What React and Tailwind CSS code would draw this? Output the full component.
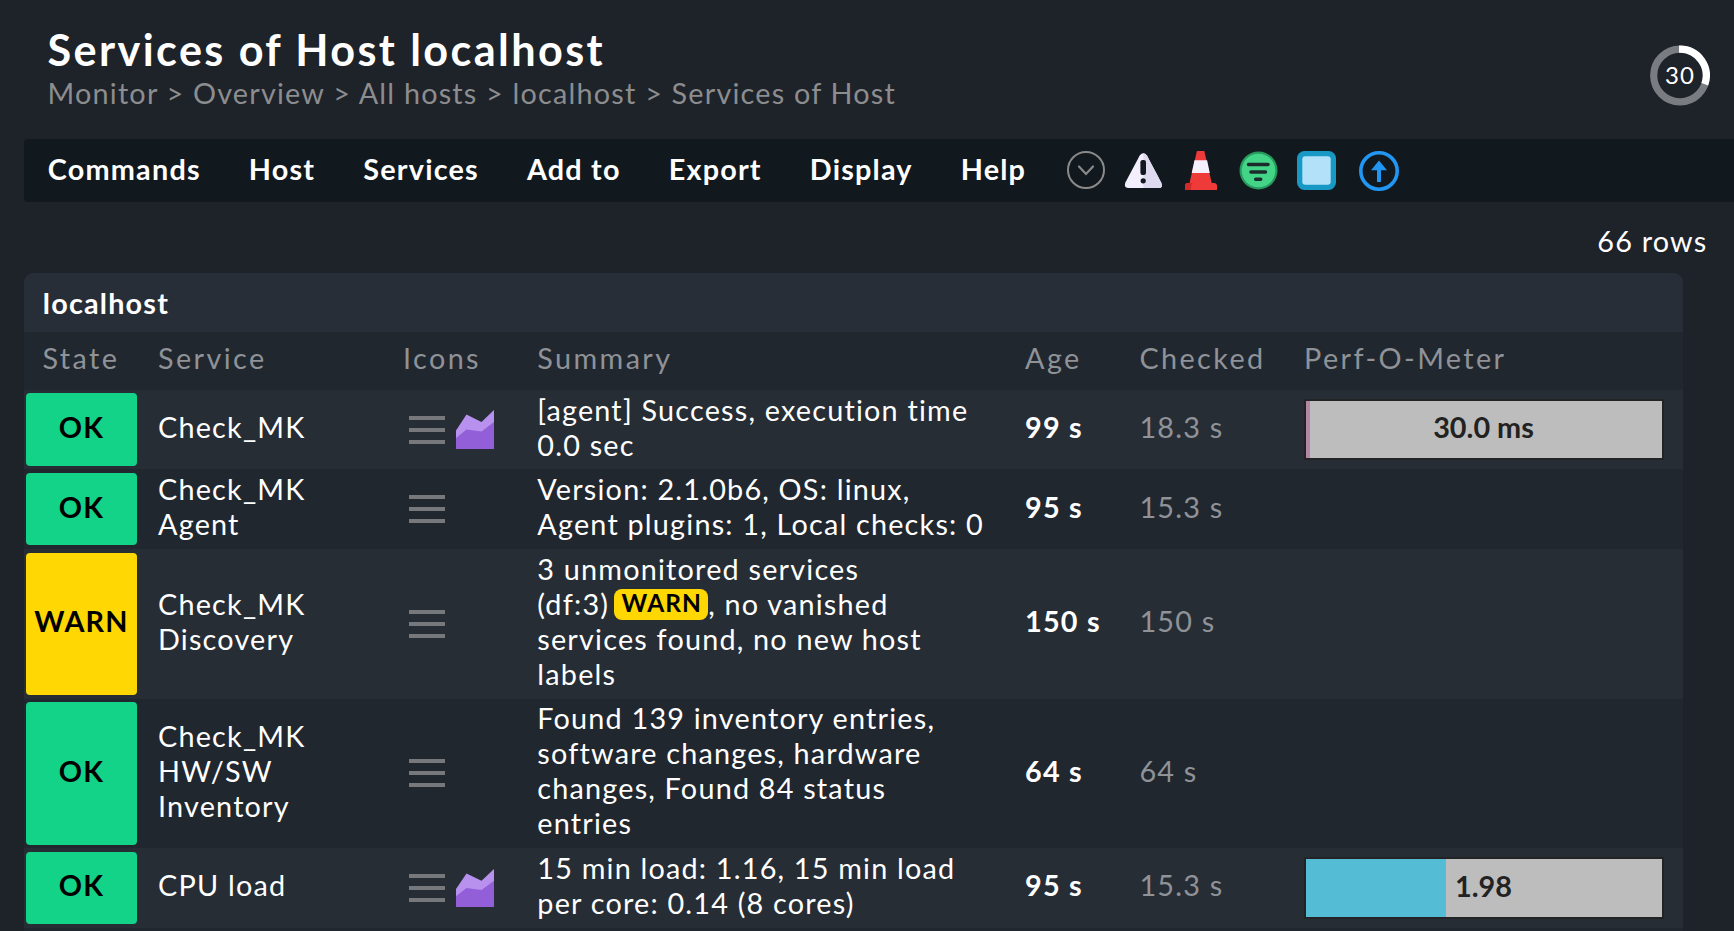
const COLS =
  "grid grid-cols-[119px_245px_134px_488px_114px_165px_394px] w-[1659px]";

const MENU = ["Commands", "Host", "Services", "Add to", "Export", "Display", "Help"];

const ROWS = [
  {
    state: "OK",
    service: ["Check_MK"],
    graph: "h-[39px]",
    summary: ["[agent] Success, execution time", "0.0 sec"],
    age: "99 s",
    checked: "18.3 s",
    perf: { text: "30.0 ms", width: 1, color: "#b586a5", size: "h-[61px]" },
    height: "h-[79px]",
    pad: "pt-[3px] pb-[3px]",
  },
  {
    state: "OK",
    service: ["Check_MK", "Agent"],
    summary: ["Version: 2.1.0b6, OS: linux,", "Agent plugins: 1, Local checks: 0"],
    age: "95 s",
    checked: "15.3 s",
    height: "h-[80px]",
    pad: "pt-[4px] pb-[4px]",
  },
  {
    state: "WARN",
    service: ["Check_MK", "Discovery"],
    summary: [
      "3 unmonitored services",
      <>
        (df:3)
        <span className="mt-[2px] ml-[5px] inline-block h-[31px] w-[94px] rounded-[8px] bg-[#ffd703] pl-px text-center align-top text-[24.5px] leading-[27px] font-bold tracking-[1px] text-black">
          WARN
        </span>
        , no vanished
      </>,
      "services found, no new host",
      "labels",
    ],
    age: "150 s",
    checked: "150 s",
    height: "h-[150px]",
    pad: "pt-[4px] pb-[4px]",
    cellPad: "pb-[6px]",
  },
  {
    state: "OK",
    service: ["Check_MK", "HW/SW", "Inventory"],
    summary: [
      "Found 139 inventory entries,",
      "software changes, hardware",
      "changes, Found 84 status",
      "entries",
    ],
    age: "64 s",
    checked: "64 s",
    height: "h-[149px]",
    pad: "pt-[3px] pb-[3px]",
    summaryPad: "pb-[6px]",
    iconPad: "pb-px",
  },
  {
    state: "OK",
    service: ["CPU load"],
    graph: "h-[38px]",
    summary: ["15 min load: 1.16, 15 min load", "per core: 0.14 (8 cores)"],
    age: "95 s",
    checked: "15.3 s",
    perf: { text: "1.98", width: 39.3, color: "#54bcd4", size: "h-[62px]" },
    height: "h-[80px]",
    pad: "pt-[4px] pb-[4px]",
    cellPad: "pb-[6px]",
    servicePad: "pb-[6px]",
  },
];

function MenuIcons() {
  return (
    <div className="flex items-center">
      <svg className="h-[39px] w-[39px]" viewBox="0 0 39 39" fill="none">
        <circle cx="19" cy="19" r="18" stroke="#8a8a8a" strokeWidth="2" />
        <path d="M12 15.5l7 7.5 7-7.5" stroke="#8a8a8a" strokeWidth="2.2" strokeLinecap="round" />
      </svg>
      <svg className="ml-[18px] h-[39px] w-[40px]" viewBox="0 0 40 39">
        <path d="M15.7 4.6Q19.3 0 22.9 4.6L37.2 31.5Q39.5 37 34.5 37H4.5Q-0.5 37 1.4 31.5z" fill="#f3effe" />
        <path d="M19.3 2.2Q21.5 2.4 22.9 4.6L37.2 31.5Q39.5 37 34.5 37H19.3z" fill="#e0daf1" />
        <rect x="16.4" y="9" width="5.6" height="15" rx="2.2" fill="#11181e" />
        <circle cx="19.2" cy="29.8" r="2.6" fill="#11181e" />
      </svg>
      <svg className="ml-[20px] h-[39px] w-[34px]" viewBox="0 0 34 39">
        <path d="M12.9 0H20.3L28 33H5.3z" fill="#ef3a3a" />
        <path d="M10.5 9.3h12.6L25.8 22H7.7z" fill="#f5f0ff" />
        <path d="M1 39V35q0-3 3-3h26q3 0 3 3v4z" fill="#ef3a3a" />
        <path d="M1 39V35q0-3 3-3h5q-2 1-2 4v3z" fill="#d22a2a" />
      </svg>
      <svg className="ml-[21px] h-[39px] w-[39px]" viewBox="0 0 39 39">
        <circle cx="19.5" cy="19.5" r="19" fill="#279a5d" />
        <circle cx="19.5" cy="19.5" r="16.8" fill="#44d488" />
        <path d="M9.5 13.5h19.5M12 21h14.5M16.7 28.2h5" stroke="#1b2a2b" strokeWidth="3.5" strokeLinecap="round" />
      </svg>
      <svg className="ml-[18.5px] h-[39px] w-[39px]" viewBox="0 0 39 39">
        <rect width="39" height="39" rx="7.5" fill="#1798c5" />
        <rect x="5.3" y="5.3" width="28.4" height="28.4" rx="3" fill="#b3e1f9" />
      </svg>
      <svg className="mt-px ml-[23px] h-[40px] w-[40px]" viewBox="0 0 40 40">
        <circle cx="20" cy="20" r="18.2" fill="none" stroke="#2196f3" strokeWidth="3.6" />
        <path d="M20 9.5L28 19.3H22V31h-4V19.3h-6z" fill="#2196f3" />
      </svg>
    </div>
  );
}

function Hamburger() {
  return (
    <svg className="h-[28px] w-[36px]" viewBox="0 0 36 28">
      <path d="M0 0h36v4H0zM0 12h36v4H0zM0 24h36v4H0z" fill="#76787b" />
    </svg>
  );
}

function Graph({ size }) {
  return (
    <svg className={`ml-[11px] w-[38px] ${size}`} viewBox="0 0 38 39" preserveAspectRatio="none">
      <path d="M0 20.5L10.5 4.5L25.5 12L38 0V39H0z" fill="#b891ee" />
      <path d="M0 28L10.5 19.5L25.5 21.5L38 12V39H0z" fill="#925fd9" />
    </svg>
  );
}

function PerfMeter({ perf }) {
  return (
    <div className={`grid w-[360px] border-2 border-[#222324] bg-[#bdbdbd] ${perf.size}`}>
      <div
        className="col-start-1 row-start-1 h-full"
        style={{ width: `${perf.width}%`, backgroundColor: perf.color }}
      />
      <div className="col-start-1 row-start-1 self-center pr-px pb-1 text-center font-bold tracking-normal text-[#222]">
        {perf.text}
      </div>
    </div>
  );
}

function Lines({ items }) {
  return (
    <div className="whitespace-nowrap">
      {items.map((t, i) => (
        <div key={i} className="h-[35px]">
          {t}
        </div>
      ))}
    </div>
  );
}

function Row({ row, even }) {
  const cellPad = row.cellPad || "pb-1";
  return (
    <div className={`${COLS} ${row.height} ${even ? "bg-[#262d35]" : "bg-[#21272f]"}`}>
      <div className={`pl-[2px] ${row.pad}`}>
        <div
          className={`flex h-full w-[111px] items-center justify-center rounded-[4px] font-bold text-black ${cellPad} ${
            row.state === "OK" ? "bg-[#13d389]" : "bg-[#ffd703]"
          }`}
        >
          {row.state}
        </div>
      </div>
      <div className={`flex items-center pl-[15px] ${row.servicePad || "pb-1"}`}>
        <Lines items={row.service} />
      </div>
      <div className={`flex items-center pl-[21px] ${row.iconPad || ""}`}>
        <Hamburger />
        {row.graph && <Graph size={row.graph} />}
      </div>
      <div className={`flex items-center pl-[15.3px] ${row.summaryPad || "pb-1"}`}>
        <Lines items={row.summary} />
      </div>
      <div className={`flex items-center pl-[15px] font-bold ${cellPad}`}>{row.age}</div>
      <div className={`flex items-center pl-[15.4px] text-[#8f9297] ${cellPad}`}>{row.checked}</div>
      <div className="flex items-center pl-[15px]">{row.perf && <PerfMeter perf={row.perf} />}</div>
    </div>
  );
}

export default function App() {
  return (
    <div className="h-[931px] w-[1734px] overflow-hidden bg-[#1e2229] font-['Lato',sans-serif] text-[28.8px] leading-[35px] tracking-[1.2px] text-white">
      <header className="flex h-[139px] justify-between pr-[24px] pl-[47.5px]">
        <div className="pt-[23px]">
          <h1 className="pb-px text-[43.2px] leading-[52px] font-bold tracking-[2.4px]">
            Services of Host localhost
          </h1>
          <div className="text-[#8c8d8f]">
            Monitor &gt; Overview &gt; All hosts &gt; localhost &gt; Services of Host
          </div>
        </div>
        <div className="mt-[45px] grid h-[61px] w-[60px] place-items-center">
          <svg className="col-start-1 row-start-1 h-[61px] w-[60px]" viewBox="0 0 60 61" fill="none">
            <circle cx="30" cy="30.5" r="26.3" stroke="#797c80" strokeWidth="7.2" />
            <path d="M29 4.2h1a26.3 26.3 0 0 1 24.8 35" stroke="#fff" strokeWidth="7.2" />
          </svg>
          <span className="col-start-1 row-start-1 pb-0.5 text-[24px] leading-[28px] tracking-[1.2px]">30</span>
        </div>
      </header>

      <nav className="ml-[24px] flex h-[63px] items-center rounded-l-[4px] bg-[#11181e] pl-[23.8px]">
        <div className="flex gap-[48px] pr-[41px] pb-[2px] font-bold whitespace-nowrap">
          {MENU.map((m) => (
            <span key={m}>{m}</span>
          ))}
        </div>
        <MenuIcons />
      </nav>

      <div className="flex h-[71px] items-start justify-end pt-[22px] pr-[26.5px]">66 rows</div>

      <main className="ml-[24px] w-[1659px]">
        <h2 className="flex h-[59px] items-center rounded-t-[9px] bg-[#272e37] pt-[1px] pl-[18.8px] text-[28.8px] font-bold">
          localhost
        </h2>
        <div className={`${COLS} h-[58px] items-center bg-[#21272f] pb-[6px] tracking-[2.4px] text-[#8f9297]`}>
          <div className="pl-[18.5px]">State</div>
          <div className="pl-[15px]">Service</div>
          <div className="pl-[15px]">Icons</div>
          <div className="pl-[15.3px]">Summary</div>
          <div className="pl-[15px]">Age</div>
          <div className="pl-[15.4px]">Checked</div>
          <div className="pl-[15px]">Perf-O-Meter</div>
        </div>
        {ROWS.map((row, i) => (
          <Row key={i} row={row} even={i % 2 === 0} />
        ))}
        <div className="h-[3px] bg-[#21272f]" />
      </main>
    </div>
  );
}
